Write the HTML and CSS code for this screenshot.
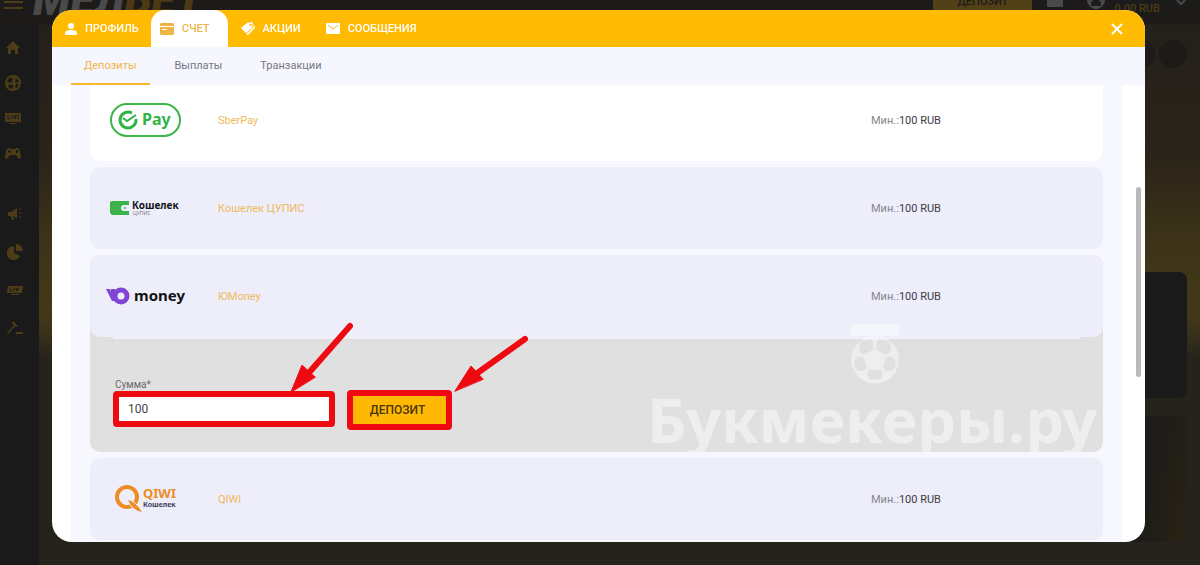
FILE: index.html
```html
<!DOCTYPE html>
<html lang="ru">

<head>
    <meta charset="UTF-8">
    <meta name="viewport" content="width=device-width, initial-scale=1.0">
    <title>Счет</title>
    <link rel="stylesheet" href="styles.css">
</head>

<body>
    <!-- страница под окном -->
    <header class="header">
        <button class="burger" type="button" aria-label="Меню"><span></span><span></span></button>
        <a class="logo" href="#">МЕЛ<span>БЕТ</span></a>
        <button class="header-deposit" type="button">ДЕПОЗИТ</button>
        <svg class="header-mail" viewBox="0 0 16 14"><path d="M0 0h16v14H0z" /><path d="M1 2l7 5 7-5" fill="none" stroke="#1c1c1c" /></svg>
        <svg class="header-user" viewBox="0 0 18 18"><circle cx="9" cy="9" r="9" /><path d="M9 5a3 3 0 0 1 3 5l2 1v4H4v-4l2-1a3 3 0 0 1 3-5z" fill="#1c1c1c" /></svg>
        <span class="balance">0.00 RUB</span>
        <svg class="header-arrow" viewBox="0 0 10 6"><path d="M1 1l4 4 4-4" /></svg>
    </header>
    <div class="page">
        <nav class="sidebar">
            <a href="#" aria-label="Главная"><svg viewBox="0 0 16 16"><path d="M8 1l7 7h-2v6H10v-4H6v4H3V8H1z" /></svg></a>
            <a href="#" aria-label="Спорт"><svg viewBox="0 0 16 16"><path fill-rule="evenodd" d="M8 0a8 8 0 1 0 0 16A8 8 0 0 0 8 0zM5 2l3 2-1 3-3 1-2-2zM11 3l3 3-2 2-2-1zM5 9l3 1v3l-3 1-2-3zM11 9l3 0-2 4-2-1z" /></svg></a>
            <a href="#" aria-label="Live"><svg viewBox="0 0 16 16"><path d="M0 3h16v9H0zM4 13h8v1H4z" /><path d="M3 5v4h2M7 5v4M9 5l1 4 1-4M14 5h-1v4h1" fill="none" stroke="#1a1a1a" /></svg></a>
            <a href="#" aria-label="Игры"><svg viewBox="0 0 16 16"><path fill-rule="evenodd" d="M3 3h2l1 1h4l1-1h2q2 1 3 10l-2 1-3-4H5l-3 4-2-1Q1 4 3 3zM4 5v1H3v1h1v1h1V7h1V6H5V5zM11 5v3h2V5z" /></svg></a>
            <div class="sidebar-more">
                <a href="#" aria-label="Акции"><svg viewBox="0 0 16 16"><path d="M1 6l3 0 6-4v10L6 10l1 4H5L4 10H1z" /><path d="M12 4l2-2M12 7h3M12 10l2 2" stroke="#4d3d17" /></svg></a>
                <a href="#" aria-label="Статистика"><svg viewBox="0 0 16 16"><path d="M7 2v7l6 3A7 7 0 1 1 7 2zM9 0a7 7 0 0 1 7 7H9z" /></svg></a>
                <a href="#" aria-label="Результаты"><svg viewBox="0 0 16 16"><path d="M1 4h15l-1 7H0zM4 12h8v1H4z" /><path d="M3 6v3h2M7 6v3M9 6l1 3 1-3" fill="none" stroke="#1a1a1a" /></svg></a>
                <a href="#" aria-label="Аукцион"><svg viewBox="0 0 16 16"><path d="M6 1l5 5-2 1-1-1-7 8-1-1 7-8-2-2zM9 12h7v2H9z" /></svg></a>
            </div>
        </nav>
        <main class="backdrop">
            <div class="dots"><i></i><i></i></div>
            <div class="card"></div>
            <div class="card card-soft"></div>
        </main>
    </div>

    <!-- окно счета -->
    <section class="modal">
        <div class="modal-header">
            <nav class="tabs">
                <a class="tab" href="#">
                    <svg viewBox="0 0 12 12"><circle cx="6" cy="3" r="3" /><path d="M0 12v-2q0-3 6-3t6 3v2z" /></svg>
                    ПРОФИЛЬ
                </a>
                <a class="tab active" href="#">
                    <svg class="wide" viewBox="0 0 14 12"><path fill-rule="evenodd" d="M1 0h12l1 1v2H0V1zM0 4h14v7l-1 1H1l-1-1zM2 6v1h5V6z" /></svg>
                    СЧЕТ
                </a>
                <a class="tab" href="#">
                    <svg class="wide" viewBox="0 0 14 13"><path fill-rule="evenodd" d="M0 6l6-5 5-1 1 1-1 5-6 5zM9 2a1 1 0 1 0 1 2 1 1 0 0 0-1-2z" /><path d="M13 2l1 4-7 7-2-1 7-6z" /></svg>
                    АКЦИИ
                </a>
                <a class="tab" href="#">
                    <svg class="wide" viewBox="0 0 14 11"><rect width="14" height="11" rx="1" /><path d="M2 2l5 4 5-4" fill="none" stroke="#ffbb02" /></svg>
                    СООБЩЕНИЯ
                </a>
            </nav>
            <button class="close" type="button" aria-label="Закрыть"><svg viewBox="0 0 12 12"><path d="M1 1l10 10M11 1L1 11" /></svg></button>
        </div>
        <nav class="subtabs">
            <a class="active" href="#">Депозиты</a>
            <a href="#">Выплаты</a>
            <a href="#">Транзакции</a>
        </nav>

        <div class="content">
            <div class="methods">
                <div class="method method-white">
                    <div class="method-logo">
                        <svg class="logo-sber" viewBox="0 0 72 36">
                            <rect x="1" y="2" width="69" height="32" rx="16" fill="#fff" stroke="#3bb54a" stroke-width="2" />
                            <path d="M22 11a8 8 0 1 0 4 6" fill="none" stroke="#2fb344" stroke-width="3" />
                            <path d="M13 16l4 3 9-6" fill="none" stroke="#2fb344" stroke-width="2" />
                            <text x="32" y="23" font-size="16">Pay</text>
                        </svg>
                    </div>
                    <a class="method-name" href="#">SberPay</a>
                    <p class="method-min">Мин.:<b>100 RUB</b></p>
                </div>

                <div class="method">
                    <div class="method-logo">
                        <svg class="logo-cupis" viewBox="0 0 72 18">
                            <path d="M2 2h17v14H2L0 14V3z" fill="#3cb24a" />
                            <path d="M19 6h-5a3 3 0 0 0 0 6h5z" fill="#eeeefa" />
                            <circle cx="15" cy="9" r="1" fill="#3cb24a" />
                            <text x="22" y="10" font-size="10">Кошелек</text>
                            <text class="small" x="23" y="16" font-size="5">ЦУПИС</text>
                        </svg>
                    </div>
                    <a class="method-name" href="#">Кошелек ЦУПИС</a>
                    <p class="method-min">Мин.:<b>100 RUB</b></p>
                </div>

                <div class="method-group">
                    <div class="method">
                        <div class="method-logo">
                            <svg class="logo-money" viewBox="0 0 80 20">
                                <path d="M0 3h4l1 3V3h4v12H6z" fill="#8145d6" />
                                <circle cx="15" cy="10" r="6" fill="none" stroke="#8145d6" stroke-width="5" />
                                <text x="28" y="15" font-size="15">money</text>
                            </svg>
                        </div>
                        <a class="method-name" href="#">ЮMoney</a>
                        <p class="method-min">Мин.:<b>100 RUB</b></p>
                    </div>
                    <form class="deposit">
                        <div class="field">
                            <label for="amount">Сумма*</label>
                            <input class="mark" type="text" id="amount" name="amount" value="100">
                        </div>
                        <button class="mark" type="button">ДЕПОЗИТ</button>
                    </form>
                    <div class="watermark">
                        <svg viewBox="0 0 145 180">
                            <path d="M0 0h145v36H0z" />
                            <path fill-rule="evenodd" d="M72 36a72 72 0 1 0 1 0zM30 52L60 47 67 55 67 77 40 94 27 86 24 66zM115 52L85 47 77 55 77 77 105 94 118 86 121 66zM12 108L22 98 38 100 48 129 40 142 20 142 10 126zM133 108L123 98 107 100 97 129 105 142 125 142 135 126zM55 138L90 138 96 151 88 168 57 168 48 151z" />
                        </svg>
                        <span>Букмекеры.ру</span>
                    </div>
                    <!-- стрелки-подсказки -->
                    <svg class="arrow arrow-input" viewBox="0 0 64 72"><path d="M61 4L18 53" /><polygon points="2,70 13,43 26,55" /></svg>
                    <svg class="arrow arrow-button" viewBox="0 0 74 58"><path d="M71 4L22 39" /><polygon points="1,56 17,31 29,44" /></svg>
                </div>

                <div class="method">
                    <div class="method-logo">
                        <svg class="logo-qiwi" viewBox="0 0 62 28">
                            <circle cx="12" cy="12" r="10" fill="none" stroke="#ed8b24" stroke-width="4" />
                            <path d="M12 14q9 2 16 14-11-2-16-14z" fill="#ed8b24" stroke="#eeeefa" />
                            <text x="28" y="13" font-size="13">QIWI</text>
                            <text class="dark" x="28" y="22" font-size="7">Кошелек</text>
                        </svg>
                    </div>
                    <a class="method-name" href="#">QIWI</a>
                    <p class="method-min">Мин.:<b>100 RUB</b></p>
                </div>
            </div>
            <div class="scrollbar"></div>
        </div>
    </section>
</body>

</html>
```

FILE: styles.css
```css
* {
    margin: 0;
    padding: 0;
    box-sizing: border-box;
}

html,
body {
    height: 100%;
}

body {
    display: flex;
    flex-direction: column;
    overflow: hidden;
    background-color: #26231d;
    font-family: Roboto, "Liberation Sans", sans-serif;
    font-size: 11px;
}

a {
    text-decoration: none;
    color: inherit;
}

button,
input {
    border: 0;
    font-family: inherit;
}

svg {
    display: block;
    flex: none;
}

/* шапка сайта */
.header {
    display: flex;
    flex: none;
    align-items: center;
    height: 48px;
    margin-top: -24px;
    padding: 0 14px 0 4px;
    background-color: #1c1b1a;
}

.burger {
    display: flex;
    flex-direction: column;
    gap: 4px;
    width: 29px;
    padding-top: 10px;
    background: none;
}

.burger span {
    width: 19px;
    height: 2px;
    background-color: #4d3d17;
}

.logo {
    margin-right: auto;
    color: #4b4a4a;
    font-size: 44px;
    font-style: italic;
    font-weight: 900;
}

.logo span {
    color: #4d3a14;
}

.header-deposit {
    width: 99px;
    height: 24px;
    padding-top: 2px;
    background-color: #524017;
    color: #1c1b1a;
    font-size: 11px;
    font-weight: 500;
}

.header-mail {
    width: 16px;
    margin: 0 24px 0 15px;
    fill: #4b4a4a;
}

.header-user {
    width: 18px;
    fill: #4b4a4a;
}

.balance {
    padding: 16px 16px 0 9px;
    color: #4d3d17;
    font-weight: 500;
}

.header-arrow {
    width: 10px;
    margin-top: 4px;
    fill: none;
    stroke: #4b4a4a;
    stroke-width: 2;
}

.page {
    display: flex;
    flex: 1;
}

/* боковое меню */
.sidebar {
    display: flex;
    flex-direction: column;
    gap: 19px;
    width: 39px;
    padding: 16px 5px;
    background-color: #1a1a1a;
}

.sidebar svg {
    width: 16px;
    height: 16px;
    fill: #4d3d17;
}

.sidebar-more {
    display: flex;
    flex-direction: column;
    gap: 22px;
    padding: 26px 2px 0;
}

.backdrop {
    display: flex;
    flex: 1;
    flex-direction: column;
    align-items: flex-end;
    gap: 18px;
    padding: 16px 13px;
    background: linear-gradient(#24201b, #2b2419 25%, #3d3318 40%, #433918 54%, #26231d 62%, #26231d);
}

.dots {
    display: flex;
    gap: 4px;
    margin-bottom: 186px;
}

.dots i {
    width: 28px;
    height: 28px;
    border-radius: 50%;
    background-color: #1d1a17;
}

.card {
    width: 200px;
    height: 126px;
    border-radius: 8px;
    background-color: #1a1a1a;
}

.card-soft {
    background: linear-gradient(100deg, #1d1c18 80%, #2b2314);
}

/* окно */
.modal {
    display: flex;
    position: fixed;
    top: 10px;
    right: 55px;
    bottom: 23px;
    left: 52px;
    flex-direction: column;
    overflow: hidden;
    border-radius: 20px;
    background-color: #fff;
}

.modal-header {
    display: flex;
    flex: none;
    align-items: center;
    justify-content: space-between;
    height: 37px;
    padding-right: 22px;
    background-color: #ffbb02;
}

.tabs {
    display: flex;
    height: 100%;
}

.tab {
    display: flex;
    align-items: center;
    gap: 8px;
    padding: 0 12px 0 13px;
    color: #fff;
    fill: #fff;
    font-weight: 500;
}

.tab svg {
    width: 12px;
}

.tab svg.wide {
    width: 14px;
}

.tab.active {
    padding: 0 18px 0 9px;
    border-radius: 14px 14px 0 0;
    background-color: #fff;
    color: #eeb544;
    fill: #eeb544;
}

.close {
    background: none;
    cursor: pointer;
}

.close svg {
    width: 12px;
    fill: none;
    stroke: #fff;
    stroke-width: 2;
}

.subtabs {
    display: flex;
    flex: none;
    gap: 12px;
    height: 38px;
    padding: 0 19px;
    background-color: #f6f6fe;
    color: #777783;
    line-height: 38px;
}

.subtabs a {
    padding: 0 13px;
}

.subtabs .active {
    border-bottom: 2px solid #f4b92a;
    color: #efb549;
}

/* список способов оплаты */
.content {
    display: flex;
    position: relative;
    flex: 1;
    min-height: 0;
    padding: 0 23px 0 19px;
}

.methods {
    display: flex;
    flex: 1;
    flex-direction: column;
    justify-content: flex-end;
    gap: 6px;
    overflow: hidden;
    padding: 0 19px 2px;
    background-color: #f7f7fe;
}

.scrollbar {
    position: absolute;
    top: 102px;
    right: 4px;
    width: 5px;
    height: 190px;
    border-radius: 3px;
    background-color: #b9b9b9;
}

.method {
    display: grid;
    flex: none;
    grid-template-columns: 128px 1fr 232px;
    align-items: center;
    height: 82px;
    border-radius: 10px;
    background-color: #eeeefa;
}

.method-white {
    background-color: #fff;
}

.method-logo {
    display: flex;
    justify-content: center;
    padding-right: 17px;
}

.method-logo text {
    font-family: "Noto Sans", sans-serif;
    font-weight: 700;
}

.logo-sber {
    width: 72px;
    fill: #2fb344;
}

.logo-cupis {
    width: 72px;
    fill: #15151c;
}

.method-logo .small {
    fill: #777783;
    font-weight: 400;
}

.logo-money {
    width: 80px;
    fill: #111116;
}

.logo-qiwi {
    width: 62px;
    fill: #ed8b24;
}

.method-logo .dark {
    fill: #3d3b55;
}

.method-name {
    color: #efb95a;
}

.method-min {
    color: #85858d;
}

.method-min b {
    color: #3c3c44;
    font-weight: 400;
}

.method-group {
    position: relative;
    flex: none;
    overflow: hidden;
    border-radius: 10px;
    background-color: #e0e0e0;
}

/* форма депозита */
.deposit {
    display: flex;
    align-items: flex-end;
    gap: 12px;
    height: 115px;
    margin: 0 23px;
    padding-bottom: 22px;
    border-top: 2px solid #f0f0f6;
}

.field {
    display: flex;
    flex-direction: column;
    margin-bottom: 3px;
}

.field label {
    padding-left: 2px;
    color: #6a6a70;
    font-size: 10px;
    line-height: 12px;
}

.mark {
    border: 6px solid #ee0a10;
    border-radius: 4px;
}

.field input {
    width: 222px;
    height: 36px;
    padding: 0 9px;
    background-color: #fff;
    color: #44444a;
    font-size: 12px;
}

.deposit button {
    width: 105px;
    height: 40px;
    padding-right: 4px;
    background-color: #ffb905;
    color: #4a3508;
    font-size: 12px;
    font-weight: 500;
    cursor: pointer;
}

.watermark {
    display: flex;
    position: absolute;
    right: 6px;
    bottom: -4px;
    flex-direction: column;
    align-items: center;
    color: #fff;
    fill: #fff;
    opacity: .45;
    font-family: "Noto Sans", sans-serif;
    font-size: 61px;
    font-weight: 700;
    line-height: 72px;
    pointer-events: none;
}

.watermark svg {
    width: 48px;
    margin-left: 6px;
}

.arrow {
    position: absolute;
    fill: #ee0a10;
    stroke: #ee0a10;
    stroke-linecap: round;
    pointer-events: none;
}

.arrow path {
    stroke-width: 6;
}

.arrow-input {
    top: 67px;
    left: 199px;
    width: 64px;
}

.arrow-button {
    top: 80px;
    left: 364px;
    width: 74px;
}
```
